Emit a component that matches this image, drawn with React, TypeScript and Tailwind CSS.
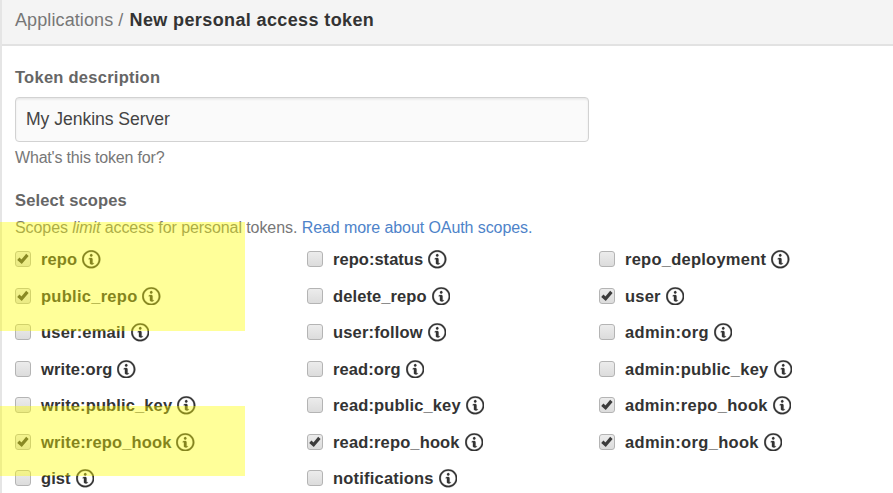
type Scope = { name: string; tracking: string; checked?: boolean };

const columns: Scope[][] = [
  [
    { name: 'repo', tracking: 'tracking-[0.08px]', checked: true },
    { name: 'public_repo', tracking: 'tracking-[0.27px]', checked: true },
    { name: 'user:email', tracking: 'tracking-[0.2px]' },
    { name: 'write:org', tracking: 'tracking-[0.1px]' },
    { name: 'write:public_key', tracking: 'tracking-[0.12px]' },
    { name: 'write:repo_hook', tracking: 'tracking-[0.14px]', checked: true },
    { name: 'gist', tracking: 'tracking-[0.08px]' },
  ],
  [
    { name: 'repo:status', tracking: 'tracking-[0.03px]' },
    { name: 'delete_repo', tracking: 'tracking-[0.1px]' },
    { name: 'user:follow', tracking: 'tracking-[0.17px]' },
    { name: 'read:org', tracking: 'tracking-[0.1px]' },
    { name: 'read:public_key', tracking: 'tracking-[0.14px]' },
    { name: 'read:repo_hook', tracking: 'tracking-[0.14px]', checked: true },
    { name: 'notifications', tracking: 'tracking-[0.2px]' },
  ],
  [
    { name: 'repo_deployment', tracking: 'tracking-[0.25px]' },
    { name: 'user', tracking: 'tracking-[0.2px]', checked: true },
    { name: 'admin:org', tracking: 'tracking-[0.36px]' },
    { name: 'admin:public_key', tracking: 'tracking-[0.26px]' },
    { name: 'admin:repo_hook', tracking: 'tracking-[0.29px]', checked: true },
    { name: 'admin:org_hook', tracking: 'tracking-[0.33px]', checked: true },
  ],
];

function InfoIcon() {
  return (
    <svg viewBox="-.1 .88 14.2 14.2" className="ml-[5px] size-[18.5px] shrink-0" fill="currentColor" stroke="currentColor" strokeWidth=".2">
      <path d="M6.3 5.69a.942.942 0 0 1-.28-.7c0-.28.09-.52.28-.7.19-.18.42-.28.7-.28.28 0 .52.09.7.28.18.19.28.42.28.7 0 .28-.09.52-.28.7a1 1 0 0 1-.7.3c-.28 0-.52-.11-.7-.3zM8 7.99c-.02-.25-.11-.48-.31-.69-.2-.19-.42-.3-.69-.31H6c-.27.02-.48.13-.69.31-.2.2-.3.44-.31.69h1v3c.02.27.11.5.31.69.2.2.42.31.69.31h1c.27 0 .48-.11.69-.31.2-.19.3-.42.31-.69H8V7.98v.01zM7 2.3c-3.14 0-5.7 2.54-5.7 5.68 0 3.14 2.56 5.7 5.7 5.7s5.7-2.55 5.7-5.7c0-3.15-2.56-5.69-5.7-5.69v.01zM7 .98c3.86 0 7 3.14 7 7s-3.14 7-7 7-7-3.12-7-7 3.14-7 7-7z" />
    </svg>
  );
}

function Checkbox({ checked }: { checked?: boolean }) {
  return (
    <span
      role="checkbox"
      aria-checked={!!checked}
      className="flex size-4 shrink-0 items-center justify-center rounded-[3px] border-[1.5px] border-[#b4b4b4] bg-linear-to-b from-[#ececec] to-[#dcdcdc]"
    >
      {checked && (
        <svg viewBox="0 0 12 12" className="size-3 shrink-0" fill="none" stroke="#3c3c3c" strokeWidth="3.2">
          <path d="M1.3 5.8 4.6 8.8 10.4 1.9" />
        </svg>
      )}
    </span>
  );
}

function ScopeRow({ name, tracking, checked }: Scope) {
  return (
    <label className="flex h-[36.5px] items-center whitespace-nowrap text-[16.5px] font-bold text-[#333]">
      <Checkbox checked={checked} />
      <span className={`ml-2.5 pt-px ${tracking}`}>{name}</span>
      <InfoIcon />
    </label>
  );
}

export default function App() {
  return (
    <div className="relative h-[493px] w-[893px] overflow-hidden bg-white font-['Liberation_Sans',Arial,sans-serif] text-[#777]">
      <div className="h-full border-l-2 border-[#e5e5e5]">
        <header className="flex h-[46px] items-center whitespace-pre border-b-2 border-[#e2e2e2] bg-[#f4f4f4] pb-1 pl-[13px] text-[18px] tracking-[0.1px]">
          <span>Applications / </span>
          <strong className="ml-px tracking-[0.38px] text-[#333]">New personal access token</strong>
        </header>

        <main className="pl-[13px]">
          <h2 className="mt-[21px] h-5 text-[16.5px] leading-5 font-bold tracking-[0.26px] text-[#666]">Token description</h2>
          <div className="mt-[10px] flex h-[45px] w-[574px] items-center rounded-[4px] border-[1.5px] border-[#d2d2d2] bg-[#fafafa] pl-[10px] text-[17.6px] tracking-[-0.05px] text-[#444] shadow-[inset_0_1.5px_2px_rgba(0,0,0,0.08)]">
            My Jenkins Server
          </div>
          <p className="mt-[6px] h-5 text-[16px] leading-5 tracking-[-0.18px]">What's this token for?</p>

          <h2 className="mt-[22px] h-5 text-[16.5px] leading-5 font-bold tracking-[0.14px] text-[#666]">Select scopes</h2>
          <p className="mt-[8px] h-5 text-[16px] leading-5 tracking-[-0.08px]">
            Scopes <em>limit</em> access for personal tokens. <a className="text-[#4e83c9]">Read more about OAuth scopes.</a>
          </p>

          <div className="mt-[3px] grid grid-cols-[292px_292px_1fr]">
            {columns.map((scopes, i) => (
              <div key={i}>
                {scopes.map((scope) => (
                  <ScopeRow key={scope.name} {...scope} />
                ))}
              </div>
            ))}
          </div>
        </main>
      </div>

      {/* Marker highlights drawn over the granted scopes */}
      <div className="absolute top-[222px] left-0 h-[109px] w-[245px] bg-[#ffff00]/40" />
      <div className="absolute top-[406px] left-0 h-[70px] w-[245px] bg-[#ffff00]/40" />
    </div>
  );
}
